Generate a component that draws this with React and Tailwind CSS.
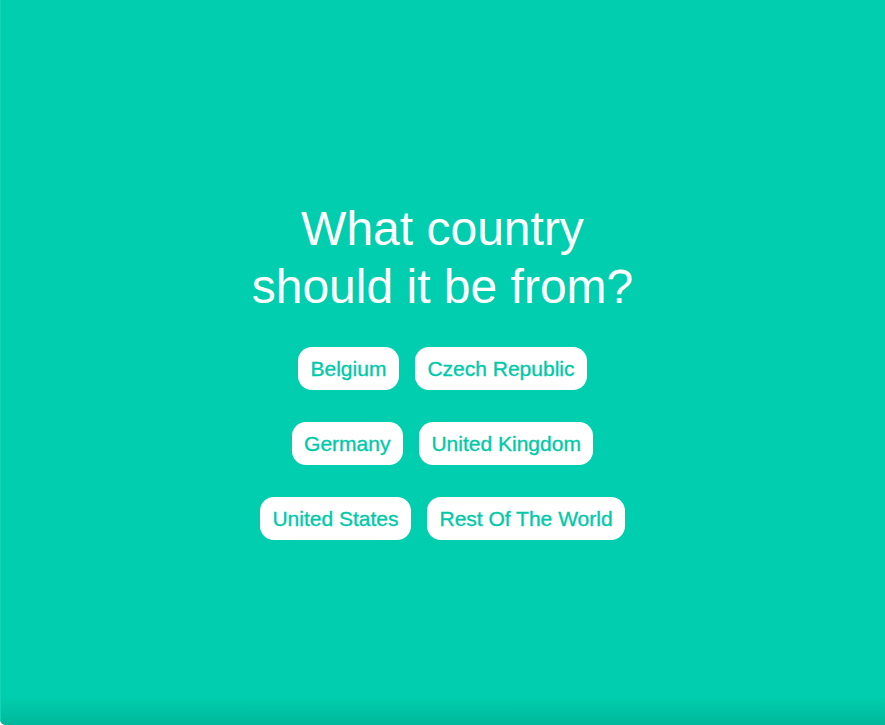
export default function App() {
  const rows = [
    ["Belgium", "Czech Republic"],
    ["Germany", "United Kingdom"],
    ["United States", "Rest Of The World"],
  ];
  return (
    <div
      className="relative h-[725px] w-[885px] overflow-hidden bg-[#00ceae] rounded-bl-[6px]"
      style={{ fontFamily: '"Liberation Sans", Arial, Helvetica, sans-serif' }}
    >
      <div className="flex flex-col items-center pt-[200px]">
        <h1 className="text-center text-[48px] leading-[58px] font-normal text-white">
          What country
          <br />
          should it be from?
        </h1>
        <div className="mt-[31px] flex flex-col items-center gap-[32px]">
          {rows.map((row, i) => (
            <div key={i} className="flex gap-[16px]">
              {row.map((label) => (
                <button
                  key={label}
                  className="h-[43px] rounded-[14px] bg-white px-[12.5px] text-[21px] leading-[43px] text-[#00c9aa] [-webkit-text-stroke:0.35px_#00c9aa]"
                >
                  {label}
                </button>
              ))}
            </div>
          ))}
        </div>
      </div>
      <div className="pointer-events-none absolute inset-x-0 bottom-0 h-[28px] bg-gradient-to-b from-transparent to-[#00b79b]" />
      <div className="pointer-events-none absolute inset-y-0 left-0 w-px bg-[#14d4b6]" />
    </div>
  );
}
